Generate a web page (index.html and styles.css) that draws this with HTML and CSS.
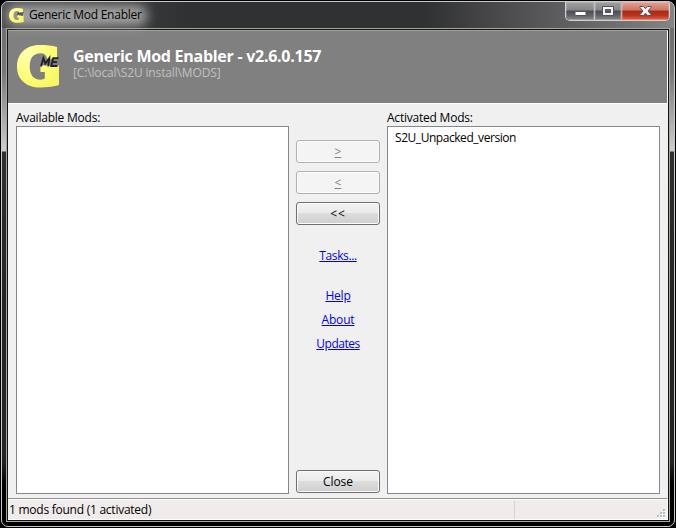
FILE: index.html
```html
<!DOCTYPE html>
<html lang="en">
<head>
<meta charset="utf-8">
<title>Generic Mod Enabler</title>
<link rel="stylesheet" href="styles.css">
</head>
<body>
<div class="window">
  <header class="titlebar">
    <svg class="app-icon" viewBox="0 0 44 44"><use href="#gme"/></svg>
    <span class="title">Generic Mod Enabler</span>
    <div class="controls">
      <button class="ctl min" aria-label="Minimize"><svg width="13" height="12" viewBox="0 0 13 12"><rect x="1" y="5.5" width="11" height="4" rx=".5" fill="#fff" stroke="#50535e"/></svg></button>
      <button class="ctl max" aria-label="Maximize"><svg width="12" height="12" viewBox="0 0 12 12"><path fill-rule="evenodd" d="M.5 1.500h11v9H.5zM3.500 4.500v3h5v-3z" fill="#f4f4f4" stroke="#50535e"/></svg></button>
      <button class="ctl close" aria-label="Close window"><svg width="13" height="12" viewBox="0 0 13 12"><path d="M1 1.500h3.500l2 2.200 2-2.200H12v1L9 6l3 3.500v1H8.500l-2-2.200-2 2.200H1v-1L4 6 1 2.500z" fill="#f7f7f7" stroke="#52505f"/></svg></button>
    </div>
  </header>
  <div class="client">
    <section class="banner">
      <svg class="logo" viewBox="0 0 44 44">
        <defs><radialGradient id="yellow" cx=".3" cy=".25" r=".8"><stop offset="0" stop-color="#ffffb0"/><stop offset=".6" stop-color="#ffff78"/><stop offset="1" stop-color="#f7f766"/></radialGradient></defs>
        <g id="gme">
          <path d="M41 2v12H31c-1-3.500-3-5.500-6.500-5.500-8 0-11.500 5-11.500 13.500s4 13.500 11 13.500c2 0 3.500-.5 4.500-1.500v-6.500H24V21h19v20c-5 1.500-11 2.500-19 2.500C9 43.500 0 35 0 22 0 9 9 0 23 0c7 0 13 .5 18 2z" fill="url(#yellow)"/>
          <path d="M24.500 22l2.500-8.500 2 5.500 4-5.500-1 8.500M42.500 13.500h-5.500l-2 8h6.500M36 17.500H41" fill="none" stroke="#20202c" stroke-width="1.900"/>
        </g>
      </svg>
      <div class="heading">
        <h1>Generic Mod Enabler - v2.6.0.157</h1>
        <p>[C:\local\S2U install\MODS]</p>
      </div>
    </section>
    <main class="content">
      <section class="column">
        <label>Available Mods:</label>
        <div class="list"></div>
      </section>
      <nav class="actions">
        <button class="btn off"><u>&gt;</u></button>
        <button class="btn off"><u>&lt;</u></button>
        <button class="btn all">&lt;&lt;</button>
        <a class="tasks">Tasks...</a>
        <a class="help">Help</a>
        <a class="about">About</a>
        <a class="updates">Updates</a>
        <button class="btn bottom">Close</button>
      </nav>
      <section class="column">
        <label>Activated Mods:</label>
        <div class="list"><div class="item">S2U_Unpacked_version</div></div>
      </section>
    </main>
    <footer class="status">
      <span>1 mods found (1 activated)</span>
      <div class="pane"><svg width="9" height="9" viewBox="0 0 9 9"><path d="M7 1h2v2H7zM4 4h2v2H4zM7 4h2v2H7zM1 7h2v2H1zM4 7h2v2H4zM7 7h2v2H7z" fill="#fff"/><path d="M6 0h2v2H6zM3 3h2v2H3zM6 3h2v2H6zM0 6h2v2H0zM3 6h2v2H3zM6 6h2v2H6z" fill="#bbb8b8"/></svg></div>
    </footer>
  </div>
</div>
</body>
</html>
```
FILE: styles.css
```css
* { box-sizing: border-box; }
body {
  margin: 0;
  background: #000;
  font: 12px/16px "Open Sans", "Noto Sans", sans-serif;
  color: #000;
  white-space: nowrap;
}
button { font: inherit; padding: 0; }
.window {
  width: 674px;
  height: 526px;
  margin: 1px;
  padding: 0 4px 4px;
  border: 1px solid #c9c9c9;
  border-radius: 7px;
  background:
    linear-gradient(90deg, #4c4c4c, #303133 28%, #303133 63%, #4c4c4f 75%, #777 95%, #858585) 0 0 / 100% 26px no-repeat,
    linear-gradient(#6d6966 0, #777 70px, #d2cccc 149px, #332f2f 150px, #282424 290px, #242222 460px, #000 482px);
  overflow: hidden;
}
.titlebar {
  height: 26px;
  display: flex;
  align-items: flex-start;
  padding-left: 3px;
}
.app-icon {
  width: 15px;
  height: 15px;
  margin-top: 6px;
  position: relative;
  z-index: 1;
}
.title {
  margin: 5px 0 0 5px;
  letter-spacing: -.26px;
  position: relative;
  isolation: isolate;
}
.title::before {
  content: "";
  position: absolute;
  inset: -2px -5px -3px -22px;
  z-index: -1;
  border-radius: 9px;
  background: #a4a4a4;
  filter: blur(6px);
}
.controls {
  display: flex;
  width: 105px;
  height: 19px;
  margin-left: auto;
  border: 1px solid #d0d0d0;
  border-top: 0;
  border-radius: 0 0 5px 5px;
  overflow: hidden;
}
.ctl {
  border: 0;
  display: flex;
  justify-content: center;
  align-items: center;
  background: linear-gradient(#a0a0a0, #858585 45%, #4b4c4f 50%, #626366 75%, #898989);
  box-shadow: inset 0 0 0 1px #ffffff30;
}
.ctl.min { width: 29px; padding-top: 2px; border-right: 1px solid #c0c0c0; }
.ctl.max { width: 27px; border-right: 1px solid #d4aaa4; }
.ctl.close {
  flex: 1;
  background: linear-gradient(#e2a394, #ce7563 45%, #ab2b15 50%, #b9331c 75%, #dd6a50);
}
.client {
  width: 664px;
  height: 494px;
  border: 1px solid #a4a8a2;
  box-shadow: inset 0 0 0 1px #111;
  padding: 1px;
  display: flex;
  flex-direction: column;
}
.banner {
  height: 74px;
  flex: none;
  display: flex;
  background: #808080;
  border-top: 1px solid #a3a39c;
  border-right: 1px solid #fff;
  border-bottom: 1px solid #fff;
  padding: 14px 0 0 9px;
}
.logo { width: 43px; height: 43px; margin-right: 13px; }
.heading { padding-top: 3px; }
h1 {
  margin: 0;
  font-size: 16px;
  line-height: 17px;
  font-weight: 700;
  color: #fff;
  letter-spacing: -.27px;
}
p { margin: 0; line-height: 16px; color: #c0c0c0; letter-spacing: -.14px; }
.content {
  flex: 1;
  min-height: 0;
  display: grid;
  grid-template-columns: 273px 84px 273px;
  column-gap: 7px;
  padding: 6px 8px 4px;
  background: #f0f0f0;
}
.column { display: flex; flex-direction: column; min-width: 0; }
label { height: 16px; letter-spacing: -.22px; }
.list {
  flex: 1;
  border: 1px solid #828790;
  background: #fff;
  padding: 3px 7px;
}
.item { letter-spacing: -.45px; }
.actions {
  display: flex;
  flex-direction: column;
  align-items: center;
  padding-top: 30px;
}
.btn {
  width: 84px;
  height: 23px;
  flex: none;
  margin-bottom: 8px;
  border: 1px solid #707070;
  border-radius: 3px;
  background: linear-gradient(#f2f2f2, #ebebeb 48%, #dddddd 50%, #cfcfcf);
  box-shadow: inset 0 0 0 1px #fbfbfb;
  color: #000;
}
.btn.off { background: #f4f4f4; border-color: #adb2b5; color: #838383; }
.btn.all { letter-spacing: 1px; }
.actions a {
  color: #0000f0;
  letter-spacing: -.2px;
  text-decoration: underline;
  text-underline-offset: 1px;
}
.actions .tasks { margin: 15px 0 24px; letter-spacing: -.4px; }
.help, .about { margin-bottom: 8px; }
.actions .updates { letter-spacing: -.5px; }
.btn.bottom { margin: auto 0 1px; letter-spacing: -.1px; }
.status {
  height: 22px;
  flex: none;
  display: flex;
  background: #f0eceb;
  border-top: 1px solid #919191;
  border-right: 1px solid #fff;
  box-shadow: inset 0 1px #fff, inset 0 -1px #fff;
}
.status span { flex: 1; padding: 3px 1px; letter-spacing: -.25px; }
.pane {
  width: 153px;
  margin: 2px 0 1px;
  border-left: 1px solid #d5d2d2;
  display: flex;
  justify-content: flex-end;
  align-items: flex-end;
  padding: 0 1px 1px 0;
}
```
